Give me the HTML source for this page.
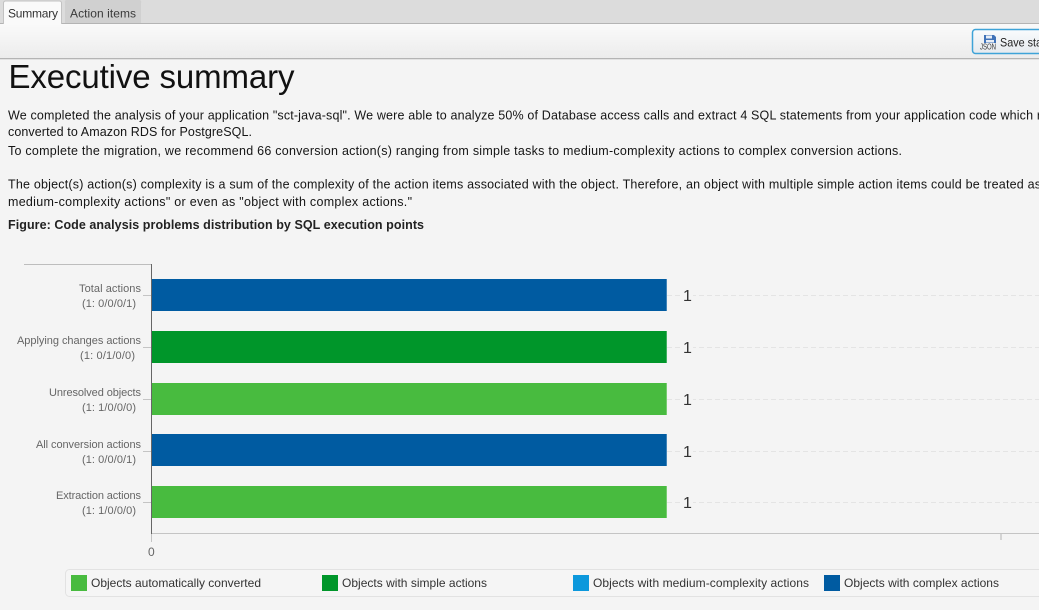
<!DOCTYPE html>
<html>
<head>
<meta charset="utf-8">
<style>
html,body{margin:0;padding:0;background:#f4f4f4;width:1039px;height:610px;overflow:hidden}
svg{display:block;position:absolute;left:0;top:0}
text{font-family:"Liberation Sans",sans-serif;font-size:12px;fill:#1c1c1c;white-space:pre}
.p{font-size:12.5px;fill:#151515}
.a{font-size:11px;fill:#666}
.l{font-size:12px;fill:#333}
.v{font-size:16px;fill:#333}
</style>
</head>
<body>
<svg width="1039" height="610" viewBox="0 0 1039 610">
<defs>
<linearGradient id="tb" x1="0" y1="0" x2="0" y2="1"><stop offset="0" stop-color="#fafafa"/><stop offset="1" stop-color="#ececec"/></linearGradient>
<linearGradient id="btn" x1="0" y1="0" x2="0" y2="1"><stop offset="0" stop-color="#f9fbfd"/><stop offset="1" stop-color="#e6eaee"/></linearGradient>
</defs>
<rect width="1039" height="610" fill="#f4f4f4"/>
<!-- tab bar -->
<rect width="1039" height="23" fill="#dcdcdc"/>
<rect y="23" width="1039" height="1" fill="#b4b4b4"/>
<rect y="24" width="1039" height="34" fill="url(#tb)"/>
<rect y="58" width="1039" height="1" fill="#b4b4b4"/>
<rect y="59" width="1039" height="1" fill="#e2e2e2"/>
<path d="M3.500 24V3a2 2 0 0 1 2-2h54a2 2 0 0 1 2 2v21" fill="#fafafa" stroke="#c2c2c2"/>
<path d="M65 23V3a2 2 0 0 1 2-3h72a2 2 0 0 1 2 3v20z" fill="#d0d0d0"/>
<text x="8" y="17.500" textLength="50" class="l">Summary</text>
<text x="70" y="17.500" textLength="66" class="l" style="fill:#3a3a3a">Action items</text>
<!-- save button -->
<rect x="972.500" y="29.500" width="80" height="24" rx="3" fill="url(#btn)" stroke="#3ea3d8" stroke-width="1.500"/>
<path d="M984 35h10l2 2v6h-12z" fill="#3f72b8"/>
<rect x="986" y="35.500" width="6" height="3" fill="#e8eef6"/>
<rect x="986" y="40" width="8" height="2.500" fill="#e8eef6"/>
<text x="980" y="49.500" textLength="16" lengthAdjust="spacingAndGlyphs" style="font-size:8.500px;fill:#333">JSON</text>
<text x="1000" y="46.500" textLength="42" lengthAdjust="spacingAndGlyphs" class="l" style="fill:#222">Save sta</text>
<!-- heading -->
<text x="8.500" y="88" textLength="286" style="font-size:33px;fill:#111">Executive summary</text>
<!-- paragraphs -->
<text x="8" y="119.500" textLength="1033" class="p">We completed the analysis of your application "sct-java-sql". We were able to analyze 50% of Database access calls and extract 4 SQL statements from your application code which r</text>
<text x="8" y="136" textLength="244" class="p">converted to Amazon RDS for PostgreSQL.</text>
<text x="8" y="155" textLength="894" class="p">To complete the migration, we recommend 66 conversion action(s) ranging from simple tasks to medium-complexity actions to complex conversion actions.</text>
<text x="8" y="188.500" textLength="1033" class="p">The object(s) action(s) complexity is a sum of the complexity of the action items associated with the object. Therefore, an object with multiple simple action items could be treated as</text>
<text x="8" y="206" textLength="404" class="p">medium-complexity actions" or even as "object with complex actions."</text>
<text x="8" y="229" textLength="416" class="p" style="font-weight:bold;fill:#222">Figure: Code analysis problems distribution by SQL execution points</text>
<!-- chart axes -->
<rect x="24" y="264" width="128" height="1" fill="#bdbdbd"/>
<rect x="151" y="264" width="1" height="270" fill="#666"/>
<rect x="152" y="533" width="887" height="1" fill="#c4c4c4"/>
<rect x="151" y="534" width="1" height="8" fill="#c4c4c4"/>
<rect x="1000" y="534" width="2" height="6" fill="#d4d4d4"/>
<!-- dashed -->
<g stroke="#e4e4e4" stroke-dasharray="5 3">
<path d="M667 295.500H1039M667 347.500H1039M667 399.500H1039M667 451.500H1039M667 502.500H1039"/>
</g>
<!-- ticks -->
<g fill="#c4c4c4">
<rect x="143" y="295" width="8" height="1"/><rect x="143" y="347" width="8" height="1"/><rect x="143" y="399" width="8" height="1"/><rect x="143" y="451" width="8" height="1"/><rect x="143" y="502" width="8" height="1"/>
</g>
<!-- bars -->
<rect x="152" y="279" width="515" height="32" fill="#005ba1"/>
<rect x="152" y="331" width="515" height="32" fill="#00962a"/>
<rect x="152" y="383" width="515" height="32" fill="#48bb3f"/>
<rect x="152" y="434" width="515" height="32" fill="#005ba1"/>
<rect x="152" y="486" width="515" height="32" fill="#48bb3f"/>
<g fill="#fff" opacity=".25">
<rect x="666" y="279" width="1" height="32"/><rect x="666" y="331" width="1" height="32"/><rect x="666" y="383" width="1" height="32"/><rect x="666" y="434" width="1" height="32"/><rect x="666" y="486" width="1" height="32"/>
</g>
<!-- values -->
<g>
<rect x="681" y="290" width="12" height="12" fill="#f4f4f4"/><rect x="681" y="342" width="12" height="12" fill="#f4f4f4"/><rect x="681" y="394" width="12" height="12" fill="#f4f4f4"/><rect x="681" y="446" width="12" height="12" fill="#f4f4f4"/><rect x="681" y="497" width="12" height="12" fill="#f4f4f4"/>
</g>
<text x="683" y="301" class="v">1</text>
<text x="683" y="353" class="v">1</text>
<text x="683" y="405" class="v">1</text>
<text x="683" y="457" class="v">1</text>
<text x="683" y="508" class="v">1</text>
<!-- category labels -->
<text x="79" y="292" textLength="62" class="a">Total actions</text>
<text x="82" y="307" textLength="54" class="a">(1: 0/0/0/1)</text>
<text x="17" y="344" textLength="124" class="a">Applying changes actions</text>
<text x="80" y="359" textLength="55" class="a">(1: 0/1/0/0)</text>
<text x="49" y="396" textLength="92" class="a">Unresolved objects</text>
<text x="82" y="411" textLength="54" class="a">(1: 1/0/0/0)</text>
<text x="36" y="448" textLength="105" class="a">All conversion actions</text>
<text x="82" y="463" textLength="54" class="a">(1: 0/0/0/1)</text>
<text x="56" y="499" textLength="85" class="a">Extraction actions</text>
<text x="82" y="514" textLength="54" class="a">(1: 1/0/0/0)</text>
<text x="148" y="556" class="a" style="font-size:12px" textLength="7">0</text>
<!-- legend -->
<rect x="65.500" y="569.500" width="990" height="27" rx="4" fill="#f5f5f5" stroke="#e2e2e2"/>
<rect x="71" y="575" width="16" height="16" fill="#48bb3f"/>
<rect x="322" y="575" width="16" height="16" fill="#00962a"/>
<rect x="573" y="575" width="16" height="16" fill="#0c98dc"/>
<rect x="824" y="575" width="16" height="16" fill="#005ba1"/>
<text x="91" y="587" textLength="170" class="l">Objects automatically converted</text>
<text x="342" y="587" textLength="145" class="l">Objects with simple actions</text>
<text x="593" y="587" textLength="216" class="l">Objects with medium-complexity actions</text>
<text x="844" y="587" textLength="155" class="l">Objects with complex actions</text>
</svg>
</body>
</html>
